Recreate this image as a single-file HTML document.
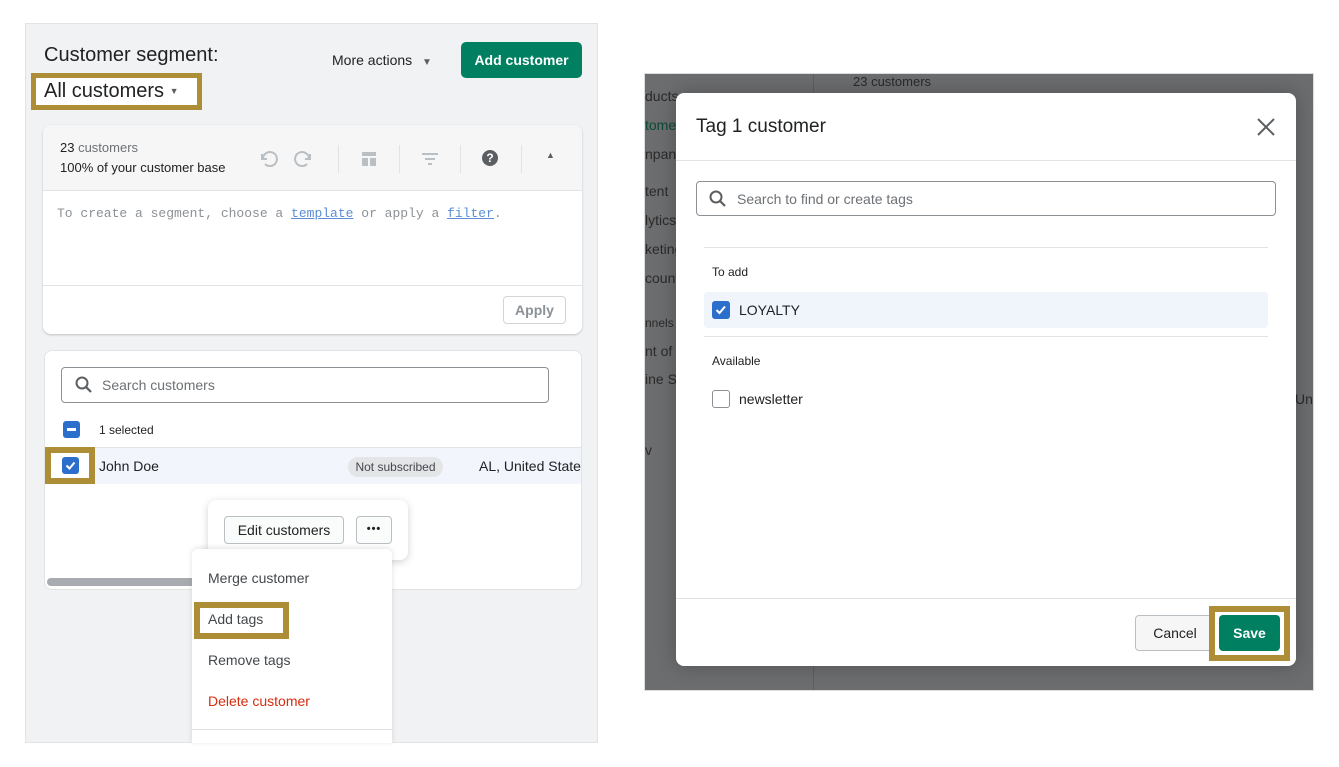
<!DOCTYPE html>
<html><head><style>
*{box-sizing:border-box;margin:0;padding:0}
body{width:1339px;height:767px;background:#fff;font-family:"Liberation Sans",sans-serif;position:relative;overflow:hidden;color:#202223}
.a{position:absolute}
.t{position:absolute;white-space:nowrap}
</style></head><body>
<!-- LEFT PANEL -->
<div class="a" style="left:25px;top:23px;width:573px;height:720px;background:#f1f2f3;border:1px solid #e1e3e5"></div>
<div class="t" style="left:44px;top:44px;font-size:20px;">Customer segment:</div>
<div class="t" style="left:332px;top:52px;font-size:14px;">More actions <span style="font-size:10px;color:#5c5f62;margin-left:6px">▼</span></div>
<div class="a" style="left:461px;top:42px;width:121px;height:36px;background:#008060;border-radius:5px;color:#fff;font-size:14px;font-weight:bold;text-align:center;line-height:36px">Add customer</div>
<div class="a" style="left:31px;top:73px;width:171px;height:37px;background:#fff;border:5px solid #ad8d36"></div>
<div class="t" style="left:44px;top:80px;font-size:20px;">All customers <span style="font-size:9px;color:#5c5f62;vertical-align:3px">▼</span></div>

<div class="a" style="left:43px;top:125px;width:539px;height:209px;background:#fff;border-radius:8px;box-shadow:0 1px 2px rgba(0,0,0,.2);overflow:hidden">
 <div class="a" style="left:0;top:0;width:539px;height:66px;background:#f6f6f7;border-bottom:1px solid #e1e3e5"></div>
 <div class="t" style="left:17px;top:15px;font-size:13px">23 <span style="color:#6d7175">customers</span></div>
 <div class="t" style="left:17px;top:35px;font-size:13px;color:#202223">100% of your customer base</div>
 <svg class="a" style="left:214px;top:22px" width="60" height="24" viewBox="0 0 60 24"><g fill="none" stroke="#babfc3" stroke-width="2"><path d="M5 7v5h5"/><path d="M6 11a7 7 0 1 1 2 6"/><path d="M53 7v5h-5"/><path d="M52 11a7 7 0 1 0 -2 6"/></g></svg>
 <div class="a" style="left:295px;top:20px;width:1px;height:28px;background:#e1e3e5"></div>
 <svg class="a" style="left:318px;top:26px" width="16" height="16"><rect x="1" y="1" width="14" height="4" fill="#babfc3"/><rect x="1" y="7" width="6" height="8" fill="#babfc3"/><rect x="9" y="7" width="6" height="8" fill="#babfc3"/></svg>
 <div class="a" style="left:356px;top:20px;width:1px;height:28px;background:#e1e3e5"></div>
 <svg class="a" style="left:378px;top:27px" width="18" height="14"><g stroke="#babfc3" stroke-width="2"><path d="M1 2h16M4 7h10M7 12h4"/></g></svg>
 <div class="a" style="left:417px;top:20px;width:1px;height:28px;background:#e1e3e5"></div>
 <div class="a" style="left:439px;top:25px;width:16px;height:16px;border-radius:50%;background:#5c5f62;color:#fff;font-size:12px;font-weight:bold;text-align:center;line-height:16px">?</div>
 <div class="a" style="left:478px;top:20px;width:1px;height:28px;background:#e1e3e5"></div>
 <div class="t" style="left:503px;top:25px;font-size:9px;color:#5c5f62">▲</div>
 <div class="t" style="left:14px;top:81px;font-family:'Liberation Mono',monospace;font-size:13px;color:#8c9196">To create a segment, choose a <span style="color:#5b8ed6;text-decoration:underline">template</span> or apply a <span style="color:#5b8ed6;text-decoration:underline">filter</span>.</div>
 <div class="a" style="left:0;top:160px;width:539px;height:1px;background:#e1e3e5"></div>
 <div class="a" style="left:460px;top:171px;width:63px;height:28px;border:1px solid #d2d5d8;border-radius:4px;color:#8c9196;font-size:14px;font-weight:bold;text-align:center;line-height:26px">Apply</div>
</div>

<div class="a" style="left:44px;top:350px;width:538px;height:240px;background:#fff;border-radius:8px;border:1px solid #e1e3e5;overflow:hidden">
 <div class="a" style="left:16px;top:16px;width:488px;height:36px;border:1px solid #8c9196;border-radius:4px"></div>
 <svg class="a" style="left:30px;top:25px" width="18" height="18"><circle cx="7" cy="7" r="5.5" fill="none" stroke="#5c5f62" stroke-width="2"/><path d="M11 11l5 5" stroke="#5c5f62" stroke-width="2.2"/></svg>
 <div class="t" style="left:57px;top:26px;font-size:14px;color:#6d7175">Search customers</div>
 <div class="a" style="left:18px;top:70px;width:17px;height:17px;background:#2c6ecb;border-radius:3px"><div class="a" style="left:4px;top:7px;width:9px;height:2.5px;background:#fff"></div></div>
 <div class="t" style="left:54px;top:72px;font-size:12px">1 selected</div>
 <div class="a" style="left:0;top:96px;width:538px;height:37px;background:#f2f5fc;border-top:1px solid #e1e3e5"></div>
 <div class="t" style="left:54px;top:107px;font-size:14px">John Doe</div>
 <div class="a" style="left:303px;top:106px;width:95px;height:20px;border-radius:10px;background:#e4e5e7;font-size:12px;text-align:center;line-height:20px;color:#44474a">Not subscribed</div>
 <div class="t" style="left:434px;top:107px;font-size:14px">AL, United States</div>
 <div class="a" style="left:2px;top:227px;width:150px;height:8px;border-radius:4px;background:#a8abaf"></div>
</div>
<div class="a" style="left:45px;top:447px;width:50px;height:37px;border:6px solid #ad8d36;background:#fff"></div>
<div class="a" style="left:62px;top:457px;width:17px;height:17px;background:#2c6ecb;border-radius:3px"></div>
<svg class="a" style="left:62px;top:457px" width="17" height="17"><path d="M4.5 8.5l3 3 5-6" fill="none" stroke="#fff" stroke-width="2"/></svg>
<div class="t" style="left:376px;top:612px;font-size:14px;color:#2c6ecb;text-decoration:underline">rs</div>

<div class="a" style="left:208px;top:500px;width:200px;height:60px;background:#fff;border-radius:8px;box-shadow:0 2px 8px rgba(0,0,0,.18)"></div>
<div class="a" style="left:224px;top:516px;width:120px;height:28px;border:1px solid #babfc3;border-radius:4px;background:#fafbfb;font-size:14px;text-align:center;line-height:26px">Edit customers</div>
<div class="a" style="left:356px;top:516px;width:36px;height:28px;border:1px solid #babfc3;border-radius:4px;background:#fafbfb;font-size:11px;text-align:center;line-height:24px;font-weight:bold;letter-spacing:1px">•••</div>

<div class="a" style="left:192px;top:549px;width:200px;height:194px;background:#fff;box-shadow:0 -1px 6px rgba(0,0,0,.12);border-radius:6px 6px 0 0"></div>
<div class="t" style="left:208px;top:570px;font-size:14px;color:#44474a">Merge customer</div>
<div class="a" style="left:194px;top:602px;width:95px;height:37px;border:6px solid #ad8d36;background:#fff"></div>
<div class="t" style="left:208px;top:611px;font-size:14px;color:#44474a">Add tags</div>
<div class="t" style="left:208px;top:652px;font-size:14px;color:#44474a">Remove tags</div>
<div class="t" style="left:208px;top:693px;font-size:14px;color:#d72c0d">Delete customer</div>
<div class="a" style="left:192px;top:729px;width:200px;height:1px;background:#e1e3e5"></div>

<!-- RIGHT -->
<div class="a" style="left:644px;top:73px;width:670px;height:618px;background:#6c6d6f;border:1px solid #ddd;overflow:hidden">
 <div class="a" style="left:168px;top:0;width:1px;height:618px;background:#5d5e60"></div>
 <div class="t" style="left:0;top:14px;font-size:14px;color:#2a2a2a">ducts</div>
 <div class="t" style="left:0;top:43px;font-size:14px;color:#0c4a35">tome</div>
 <div class="t" style="left:0;top:72px;font-size:14px;color:#2a2a2a">npani</div>
 <div class="t" style="left:0;top:109px;font-size:14px;color:#2a2a2a">tent</div>
 <div class="t" style="left:0;top:138px;font-size:14px;color:#2a2a2a">lytics</div>
 <div class="t" style="left:0;top:167px;font-size:14px;color:#2a2a2a">keting</div>
 <div class="t" style="left:0;top:196px;font-size:14px;color:#2a2a2a">count</div>
 <div class="t" style="left:0;top:242px;font-size:12px;color:#2a2a2a">nnels</div>
 <div class="t" style="left:0;top:269px;font-size:14px;color:#2a2a2a">nt of S</div>
 <div class="t" style="left:0;top:297px;font-size:14px;color:#2a2a2a">ine St</div>
 <div class="t" style="left:0;top:368px;font-size:14px;color:#2a2a2a">v</div>
 <div class="t" style="left:208px;top:0px;font-size:13px;color:#2a2a2a">23 customers</div>
 <div class="t" style="left:650px;top:317px;font-size:14px;color:#2a2a2a">Uni</div>
</div>
<div class="a" style="left:676px;top:93px;width:620px;height:573px;background:#fff;border-radius:8px;box-shadow:0 0 20px rgba(0,0,0,.25)"></div>
<div class="t" style="left:696px;top:116px;font-size:19px">Tag 1 customer</div>
<svg class="a" style="left:1256px;top:117px" width="20" height="20"><path d="M2 2l16 16M18 2L2 18" stroke="#5c5f62" stroke-width="2"/></svg>
<div class="a" style="left:676px;top:160px;width:620px;height:1px;background:#e1e3e5"></div>
<div class="a" style="left:696px;top:181px;width:580px;height:35px;border:1px solid #8c9196;border-radius:4px"></div>
<svg class="a" style="left:709px;top:190px" width="18" height="18"><circle cx="7" cy="7" r="5.5" fill="none" stroke="#5c5f62" stroke-width="2"/><path d="M11 11l5 5" stroke="#5c5f62" stroke-width="2.2"/></svg>
<div class="t" style="left:737px;top:191px;font-size:14px;color:#6d7175">Search to find or create tags</div>
<div class="a" style="left:704px;top:247px;width:564px;height:1px;background:#e1e3e5"></div>
<div class="t" style="left:712px;top:265px;font-size:12px">To add</div>
<div class="a" style="left:704px;top:292px;width:564px;height:36px;background:#f0f4fb;border-radius:4px"></div>
<div class="a" style="left:712px;top:301px;width:18px;height:18px;background:#2c6ecb;border-radius:3px"></div>
<svg class="a" style="left:712px;top:301px" width="18" height="18"><path d="M4.5 9l3 3 5.5-6.5" fill="none" stroke="#fff" stroke-width="2"/></svg>
<div class="t" style="left:739px;top:302px;font-size:14px">LOYALTY</div>
<div class="a" style="left:704px;top:336px;width:564px;height:1px;background:#e1e3e5"></div>
<div class="t" style="left:712px;top:354px;font-size:12px">Available</div>
<div class="a" style="left:712px;top:390px;width:18px;height:18px;border:1.5px solid #8c9196;border-radius:3px"></div>
<div class="t" style="left:739px;top:391px;font-size:14px">newsletter</div>
<div class="a" style="left:676px;top:598px;width:620px;height:1px;background:#e1e3e5"></div>
<div class="a" style="left:1135px;top:615px;width:80px;height:36px;border:1px solid #babfc3;border-radius:4px;background:#f6f6f7;font-size:14px;text-align:center;line-height:34px">Cancel</div>
<div class="a" style="left:1209px;top:606px;width:81px;height:55px;border:6px solid #ad8d36;background:#fff"></div>
<div class="a" style="left:1219px;top:615px;width:61px;height:36px;background:#008060;border-radius:4px;color:#fff;font-size:14px;font-weight:bold;text-align:center;line-height:36px">Save</div>
</body></html>
